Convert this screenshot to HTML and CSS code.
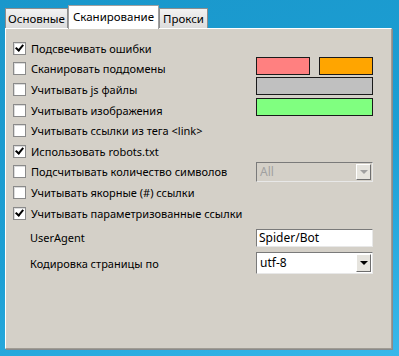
FILE: index.html
```html
<!DOCTYPE html>
<html lang="ru">
<head>
    <meta charset="UTF-8">
    <title>Настройки</title>
    <link rel="stylesheet" href="styles.css">
</head>
<body>
    <div class="tabs">
        <div class="tab first">Основные</div>
        <div class="tab active">Сканирование</div>
        <div class="tab">Прокси</div>
    </div>

    <div class="panel">
        <div class="rows">
            <label class="opt"><span class="box checked"></span>Подсвечивать ошибки</label>
            <div></div>

            <label class="opt"><span class="box"></span>Сканировать поддомены</label>
            <div class="swatches">
                <span class="swatch pink"></span>
                <span class="swatch orange"></span>
            </div>

            <label class="opt"><span class="box"></span>Учитывать js файлы</label>
            <span class="swatch wide gray"></span>

            <label class="opt"><span class="box"></span>Учитывать изображения</label>
            <span class="swatch wide green"></span>

            <label class="opt"><span class="box"></span>Учитывать ссылки из тега &lt;link&gt;</label>
            <div></div>

            <label class="opt"><span class="box checked"></span>Использовать robots.txt</label>
            <div></div>

            <label class="opt"><span class="box"></span>Подсчитывать количество символов</label>
            <div class="combo disabled">
                <span class="combo-text">All</span>
                <span class="combo-btn"><span class="arrow"></span></span>
            </div>

            <label class="opt"><span class="box"></span>Учитывать якорные (#) ссылки</label>
            <div></div>

            <label class="opt"><span class="box checked"></span>Учитывать параметризованные ссылки</label>
            <div></div>
        </div>

        <div class="fields">
            <span class="lbl">UserAgent</span>
            <input class="edit" type="text" value="Spider/Bot">

            <span class="lbl">Кодировка страницы по</span>
            <div class="combo tall">
                <span class="combo-text">utf-8</span>
                <span class="combo-btn"><span class="arrow"></span></span>
            </div>
        </div>
    </div>
</body>
</html>
```

FILE: styles.css
```css
html, body {
    height: 100%;
}
body {
    margin: 0;
    padding: 5px 7px 7px 5px;
    box-sizing: border-box;
    display: flex;
    flex-direction: column;
    font-family: "Noto Sans", "DejaVu Sans", sans-serif;
    font-size: 11px;
    color: #000;
    background: linear-gradient(160deg, #1a97cb 0%, #1c9fd4 55%, #38b8ea 100%);
}
.tabs {
    display: flex;
    align-items: flex-end;
    height: 23px;
}
.tab {
    height: 20px;
    line-height: 19px;
    padding: 0 3px;
    box-sizing: border-box;
    border: 1px solid #8d8d8d;
    border-bottom: none;
    font-size: 11.5px;
    background: linear-gradient(#f2f2f2, #dcdcdc);
}
.tab.first {
    padding: 0 2px;
}
.tab.active {
    height: 24px;
    line-height: 21px;
    margin-bottom: -1px;
    padding: 0 4px;
    background: #fff;
    border-color: #a0a0a0;
    position: relative;
    z-index: 1;
}
.panel {
    flex: 1;
    background: #d4d0c8;
    border: 1px solid #fff;
    border-right-color: #a09c94;
    border-bottom-color: #a09c94;
    box-shadow: 1px 1px 0 #8a8a8a;
    padding: 9px 18px 0 7px;
}
.rows {
    display: grid;
    grid-template-columns: minmax(0, 1fr) 117px;
    grid-auto-rows: 20.6px;
    align-items: center;
}
.opt {
    display: flex;
    align-items: center;
    white-space: nowrap;
}
.box {
    width: 11px;
    height: 11px;
    margin-right: 5px;
    background: #fff;
    border: 1px solid #8a8a8a;
    box-shadow: inset 1px 1px 0 #dcdcdc;
    flex-shrink: 0;
    position: relative;
}
.box.checked::after {
    content: "";
    position: absolute;
    left: 3px;
    top: 0px;
    width: 3px;
    height: 6px;
    border: solid #000;
    border-width: 0 2px 2px 0;
    transform: rotate(40deg);
}
.swatches {
    display: flex;
    justify-content: space-between;
    margin-top: -6px;
}
.swatch {
    display: block;
    width: 52px;
    height: 16px;
    border: 1px solid #1a1a1a;
}
.swatch.wide {
    width: 115px;
    margin-top: -6px;
}
.pink { background: #ff8080; }
.orange { background: #ffa500; }
.gray { background: #c0c0c0; }
.green { background: #80ff80; }

.combo {
    display: flex;
    height: 20px;
    box-sizing: border-box;
    background: #fff;
    border: 1px solid #7a7a7a;
    border-right-color: #e8e8e8;
    border-bottom-color: #e8e8e8;
    padding: 1px;
    font-size: 12px;
}
.combo.tall {
    height: 22px;
}
.combo-text {
    flex: 1;
    padding-left: 2px;
    line-height: 16px;
    align-self: center;
}
.combo-btn {
    width: 15px;
    background: #e6e4de;
    border: 1px solid #fff;
    border-right-color: #6e6e6e;
    border-bottom-color: #6e6e6e;
    box-sizing: border-box;
    display: flex;
    align-items: center;
    justify-content: center;
}
.arrow {
    width: 0;
    height: 0;
    border-left: 4px solid transparent;
    border-right: 4px solid transparent;
    border-top: 4px solid #000;
}
.combo.disabled {
    background: #d4d0c8;
    color: #a0a0a0;
}
.combo.disabled .arrow {
    border-top-color: #a0a0a0;
}
.fields {
    display: grid;
    grid-template-columns: minmax(0, 1fr) 117px;
    grid-template-rows: 21px 22px;
    row-gap: 4px;
    align-items: center;
    margin-top: 4px;
    padding-left: 17px;
}
.lbl {
    white-space: nowrap;
}
.edit {
    width: 117px;
    height: 18px;
    box-sizing: border-box;
    margin: 0;
    padding: 0 2px;
    font: inherit;
    font-size: 12px;
    border: 1px solid #7a7a7a;
    border-right-color: #e8e8e8;
    border-bottom-color: #e8e8e8;
    background: #fff;
    outline: none;
}
```
